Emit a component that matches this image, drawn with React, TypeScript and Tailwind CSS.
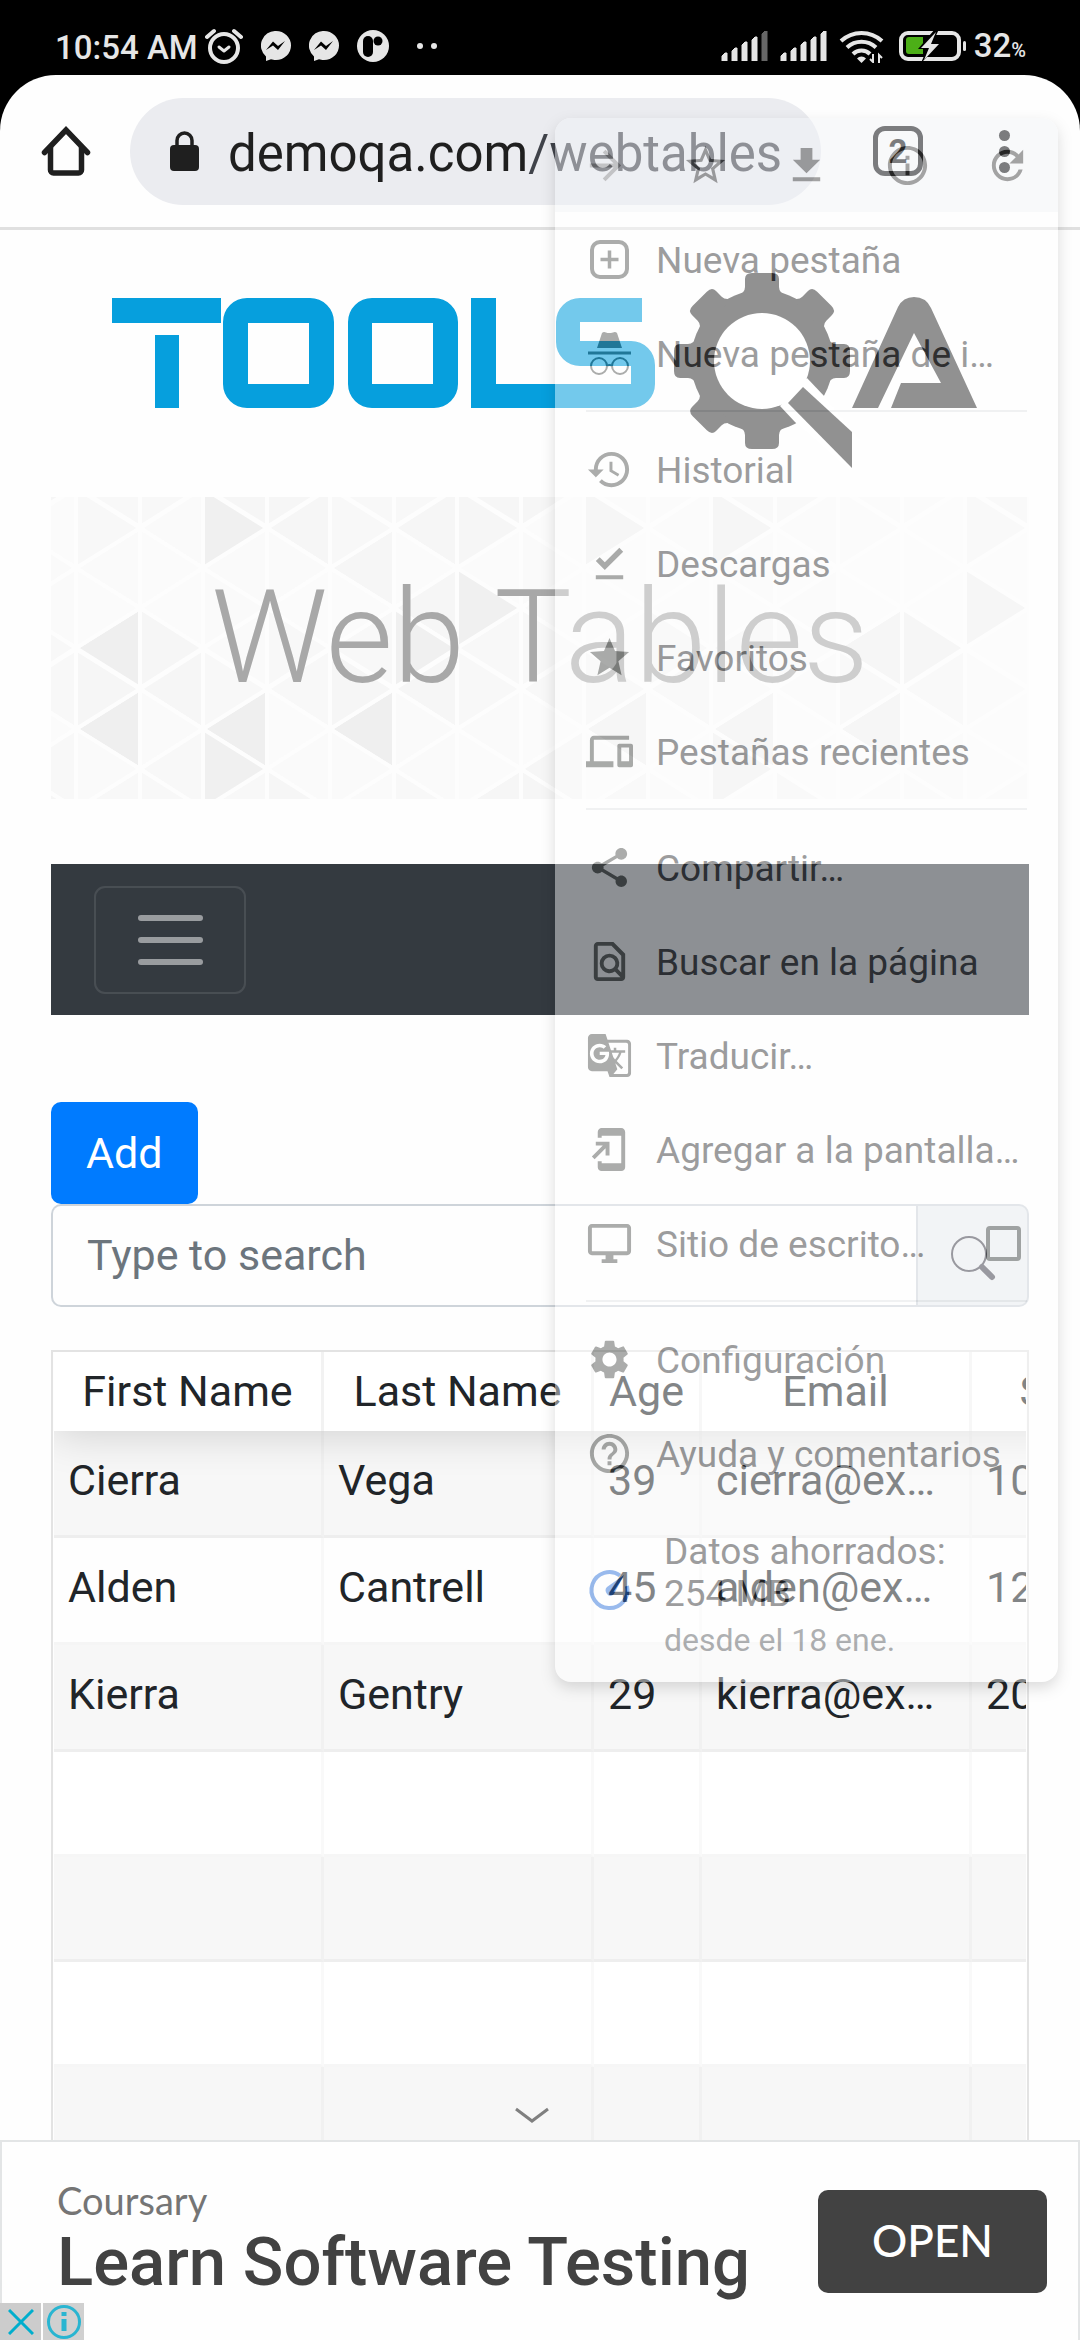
import React from "react";
import {
  MdAddToHomeScreen,
  MdArrowForward,
  MdDevices,
  MdFileDownload,
  MdFileDownloadDone,
  MdGTranslate,
  MdHelpOutline,
  MdHistory,
  MdInfoOutline,
  MdOutlineDesktopWindows,
  MdOutlineFindInPage,
  MdRefresh,
  MdSettings,
  MdShare,
  MdStar,
  MdStarBorder,
} from "react-icons/md";

/* ---------- Status bar ---------- */

function AlarmIcon() {
  return (
    <svg className="h-[36px] w-[38px]" viewBox="1 0 38 36" fill="none" stroke="#e6e6e6" strokeLinecap="round">
      <circle cx="20" cy="20" r="14" strokeWidth="4" />
      <path d="M3 9l7-6M37 9l-7-6" strokeWidth="4" />
      <path d="M15 19l5 4 5-4" strokeWidth="3" strokeLinejoin="round" />
    </svg>
  );
}

function MessengerIcon() {
  return (
    <svg className="h-[30px] w-[30px]" viewBox="0 0 30 30">
      <path d="M15 0a15 14.500 0 0 1 0 29c-2 0-3.500-.3-5-.8L5 30v-4.500A14.500 14.500 0 0 1 15 0z" fill="#e6e6e6" />
      <path d="M5 19l7-8.500 5 4.500 7-5-7 9-5-4.500z" fill="#000" />
    </svg>
  );
}

function PIcon() {
  return (
    <svg className="h-[32px] w-[32px]" viewBox="0 0 32 32">
      <circle cx="16" cy="16" r="16" fill="#e6e6e6" />
      <rect x="6" y="6" width="10" height="21" rx="5" fill="#000" />
      <circle cx="21" cy="11" r="4.500" fill="#000" />
    </svg>
  );
}

function SignalIcon({ full }: { full: boolean }) {
  const bars = [8, 13, 19, 24, 30];
  return (
    <svg className="h-[30px] w-[47px]" viewBox="0 0 47 30">
      {bars.map((h, i) => (
        <path
          key={h}
          d={`M${i * 10 + 1} 30V${30 - h + 3}l3-3h2v${h}z`}
          fill={i === 4 && !full ? "#666" : "#e6e6e6"}
          stroke={i === 4 && !full ? "#666" : "#e6e6e6"}
          strokeWidth="1"
        />
      ))}
    </svg>
  );
}

function WifiIcon() {
  return (
    <svg className="h-[34px] w-[46px]" viewBox="0 0 46 34" fill="none" stroke="#e6e6e6" strokeWidth="4">
      <path d="M2 12a30 30 0 0 1 41 0" />
      <path d="M8 18.500a21 21 0 0 1 29 0" />
      <path d="M14 25a12 12 0 0 1 17 0" />
      <path d="M18 29.500a6 6 0 0 1 9 0L22.500 34z" fill="#e6e6e6" stroke="none" />
      <path d="M34 25v8l-3-3M40 34v-8l3 3" strokeWidth="2" />
    </svg>
  );
}

function BatteryIcon() {
  return (
    <svg className="h-[30px] w-[68px]" viewBox="0 0 68 30">
      <rect x="2" y="2" width="58" height="26" rx="7" fill="none" stroke="#e6e6e6" strokeWidth="4" />
      <rect x="64" y="10" width="3" height="10" rx="1.500" fill="#e6e6e6" />
      <path d="M10 6h14v17H10a3 3 0 0 1-3-3V9a3 3 0 0 1 3-3z" fill="#4caf17" />
      <path d="M36-2L19 18h9l-6 14 19-19h-8l7-15z" fill="#000" />
      <path d="M37 1L22 17h8l-5 12 15-16h-8z" fill="#e6e6e6" />
    </svg>
  );
}

function StatusBar() {
  return (
    <div className="flex h-[75px] shrink-0 items-center justify-between bg-black pl-[55px] pr-[54px] pt-[17px] text-[#e6e6e6]">
      <div className="flex items-center">
        <span className="pt-[4px] text-[33px] font-medium leading-[36px]">10:54 AM</span>
        <span className="ml-[7px] flex items-center gap-[18px]">
          <AlarmIcon />
          <MessengerIcon />
          <MessengerIcon />
          <PIcon />
          <span className="ml-[10px] flex gap-[8px]">
            <span className="h-[6px] w-[6px] rounded-full bg-[#e6e6e6]" />
            <span className="h-[6px] w-[6px] rounded-full bg-[#e6e6e6]" />
          </span>
        </span>
      </div>
      <div className="flex items-center">
        <SignalIcon full={false} />
        <span className="ml-[12px] flex">
          <SignalIcon full />
        </span>
        <span className="ml-[12px] mr-[14px] flex">
          <WifiIcon />
        </span>
        <BatteryIcon />
        <span className="ml-[7px] pt-[4px] text-[33px] font-medium leading-[36px]">
          32<span className="text-[20px]">%</span>
        </span>
      </div>
    </div>
  );
}

/* ---------- Browser toolbar ---------- */

function Toolbar() {
  return (
    <header className="flex h-[155px] shrink-0 items-center border-b-[3px] border-[#e0e0e0] pl-[41px]">
      <button type="button" aria-label="Inicio">
        <svg className="h-[50px] w-[50px]" viewBox="0 0 50 50" fill="none" stroke="#1f1f1f" strokeWidth="5.500">
          <path d="M3.500 26.500L25 4l21.500 22.500" strokeLinejoin="miter" strokeLinecap="round" />
          <path d="M9.500 21v23a3 3 0 0 0 3 3h25a3 3 0 0 0 3-3V21" />
        </svg>
      </button>
      <div className="ml-[39px] flex h-[107px] min-w-0 flex-1 items-center rounded-full bg-[#ebecf0] pl-[40px]">
        <svg className="h-[40px] w-[29px] shrink-0" viewBox="0 0 29 40">
          <rect x="0" y="14" width="29" height="26" rx="4" fill="#1f1f1f" />
          <path d="M7 16V9.500a7.500 7.500 0 0 1 15 0V16" fill="none" stroke="#1f1f1f" strokeWidth="3.500" />
        </svg>
        <a href="#top" className="ml-[29px] whitespace-nowrap pt-[5px] text-[51px] leading-[60px] text-[#1f1f1f]">
          demoqa.com<span className="text-[#40434a]">/webtables</span>
        </a>
      </div>
      <button
        type="button"
        aria-label="Pestañas abiertas"
        className="ml-[52px] flex h-[50px] w-[50px] items-center justify-center rounded-[12px] border-[5px] border-[#1f1f1f] text-[33px] font-bold leading-none text-[#1f1f1f]"
      >
        2
      </button>
      <button type="button" aria-label="Más opciones" className="ml-[76px] mr-[70px] flex flex-col gap-[5px]">
        <span className="h-[11px] w-[11px] rounded-full bg-[#1f1f1f]" />
        <span className="h-[11px] w-[11px] rounded-full bg-[#1f1f1f]" />
        <span className="h-[11px] w-[11px] rounded-full bg-[#1f1f1f]" />
      </button>
    </header>
  );
}

/* ---------- Page ---------- */

function Logo() {
  return (
    <svg className="h-[210px] w-[866px]" viewBox="112 260 866 210" role="img" aria-label="ToolsQA">
      <g fill="#069fdd">
        <path d="M112 298h109v25H112zM155 335h24v73h-24z" />
        <path
          fillRule="evenodd"
          d="M247 298h63a24 24 0 0 1 24 24v62a24 24 0 0 1-24 24h-63a24 24 0 0 1-24-24v-62a24 24 0 0 1 24-24zM248 323v61h61v-61z"
        />
        <path
          fillRule="evenodd"
          d="M372 298h62a24 24 0 0 1 24 24v62a24 24 0 0 1-24 24h-62a24 24 0 0 1-24-24v-62a24 24 0 0 1 24-24zM372 323v61h61v-61z"
        />
        <path d="M471 298h25v86h135v-18h-51a24 24 0 0 1-24-24v-20a24 24 0 0 1 24-24h62v24h-62v19h51a24 24 0 0 1 24 24v19a24 24 0 0 1-24 24H471z" />
      </g>
      <g fill="#3b3b3b">
        <circle cx="762" cy="361" r="71" />
        {[0, 45, 90, 180, 225, 270, 315].map((a) => (
          <path
            key={a}
            d="M737 296q8-3 8-9v-8q0-6 7-6h20q7 0 7 6v8q0 6 8 9z"
            transform={`rotate(${a} 762 361)`}
          />
        ))}
      </g>
      <circle cx="762" cy="361" r="48" fill="#fff" />
      <path d="M807 378l18 19 35 43v40l-65-58-15-16z" fill="#fff" />
      <path d="M803 387l49 45v36l-64-65z" fill="#3b3b3b" />
      <path
        d="M852 408L898 307Q903 297 914 297Q926 297 931 308L977 408H891L901 383H941L914 333L878 408Z"
        fill="#3b3b3b"
      />
    </svg>
  );
}

const STEP_X = 63.5;
const STEP_Y = 80.5;
const DARK = new Set([
  "0L151", "0L232", "2L232", "4L232", "2R272", "2R31", "5R151", "12L151", "13R151",
  "10L232", "12L232", "10R272", "10R31", "8L232", "14R111", "6R111", "8R31",
]);

function BannerPattern() {
  const tiles: { d: string; fill: string }[] = [];
  for (let i = -1; i < 16; i++) {
    const x0 = Math.round(25 + i * STEP_X);
    const x1 = Math.round(25 + (i + 1) * STEP_X);
    const leftOffset = i % 2 === 0 ? -10 : -50;
    const rightOffset = i % 2 === 0 ? -50 : -10;
    for (let k = -1; k < 6; k++) {
      const ly = Math.round(leftOffset + k * STEP_Y);
      const ry = Math.round(rightOffset + k * STEP_Y);
      const shade = (seed: number) => ["#f8f8f8", "#fafafa", "#f6f6f6", "#fbfbfb"][Math.abs(seed) % 4];
      tiles.push({
        d: `M${x0} ${ly}L${x1} ${ly - 40}V${ly + 40}Z`,
        fill: DARK.has(`${i}L${ly}`) ? "#efefef" : shade(i * 7 + k * 5 + ((i * k) % 3)),
      });
      tiles.push({
        d: `M${x1} ${ry}L${x0} ${ry - 40}V${ry + 40}Z`,
        fill: DARK.has(`${i}R${ry}`) ? "#f0f0f0" : shade(i * 3 + k * 11 + 1),
      });
    }
  }
  return (
    <svg
      className="absolute inset-0 h-full w-full"
      viewBox="0 0 978 302"
      preserveAspectRatio="xMidYMid slice"
      aria-hidden="true"
    >
      {tiles.map((t, i) => (
        <path key={i} d={t.d} fill={t.fill} stroke="#fdfdfd" strokeWidth="4" />
      ))}
    </svg>
  );
}

const people = [
  ["Cierra", "Vega", "39", "cierra@example.com", "10000"],
  ["Alden", "Cantrell", "45", "alden@example.com", "12000"],
  ["Kierra", "Gentry", "29", "kierra@example.com", "2000"],
];
const emptyRows = [3, 4, 5, 6, 7, 8, 9];

function PeopleTable() {
  return (
    <div className="mt-[43px] border-2 border-[#e3e3e3] px-px">
      <div className="overflow-hidden">
        <table className="w-[1134px] table-fixed border-separate border-spacing-0 text-[43px] leading-[50px] text-[#212529]">
          <colgroup>
            <col className="w-[270px]" />
            <col className="w-[270px]" />
            <col className="w-[108px]" />
            <col className="w-[270px]" />
            <col className="w-[216px]" />
          </colgroup>
          <thead className="relative z-10 shadow-[0_5px_41px_rgba(0,0,0,0.15)]">
            <tr>
              {["First Name", "Last Name", "Age", "Email", "Salary"].map((h) => (
                <th
                  key={h}
                  scope="col"
                  className="h-[79px] border-r-[3px] border-black/5 bg-white p-0 pb-[2px] text-center font-normal"
                >
                  {h}
                </th>
              ))}
            </tr>
          </thead>
          <tbody>
            {people.map((row) => (
              <tr key={row[0]} className="odd:bg-[#f7f7f7]">
                {row.map((cell) => (
                  <td
                    key={cell}
                    className="h-[107px] truncate border-b-[3px] border-r-[3px] border-b-black/3 border-r-black/2 px-[14px] pb-[6px] pt-0"
                  >
                    {cell}
                  </td>
                ))}
              </tr>
            ))}
            {emptyRows.map((n) => (
              <tr key={n} className="even:bg-white odd:bg-[#f7f7f7]">
                {[0, 1, 2, 3, 4].map((c) => (
                  <td
                    key={c}
                    className="h-[105px] border-b-[3px] border-r-[3px] border-b-black/3 border-r-black/2 p-0"
                  />
                ))}
              </tr>
            ))}
          </tbody>
        </table>
      </div>
    </div>
  );
}

function Page() {
  return (
    <main className="min-h-0 flex-1 overflow-hidden px-[51px]">
      <div className="flex h-[267px] items-start justify-center pl-[10px] pt-[30px]">
        <Logo />
      </div>
      <div className="relative flex h-[302px] items-center justify-center pb-[20px]">
        <BannerPattern />
        <h1 className="relative text-[130px] font-light leading-[140px] text-[#a8a8a8]">Web Tables</h1>
      </div>
      <nav className="mt-[65px] flex h-[151px] items-center bg-[#343a40] px-[43px]">
        <button
          type="button"
          aria-label="Menú"
          className="flex h-[108px] w-[152px] flex-col items-center justify-center gap-[16px] rounded-[11px] border-2 border-white/10"
        >
          <span className="h-[6px] w-[65px] rounded-full bg-[#999c9f]" />
          <span className="h-[6px] w-[65px] rounded-full bg-[#999c9f]" />
          <span className="h-[6px] w-[65px] rounded-full bg-[#999c9f]" />
        </button>
      </nav>
      <button
        type="button"
        className="mt-[87px] block h-[102px] rounded-[10px] bg-[#007bff] px-[35px] text-[43px] leading-[50px] text-white"
      >
        Add
      </button>
      <form className="flex h-[103px]">
        <input
          type="text"
          aria-label="Type to search"
          placeholder="Type to search"
          className="min-w-0 flex-1 rounded-l-[10px] border-2 border-r-0 border-[#ced4da] px-[34px] text-[43px] placeholder:text-[#6c757d]"
        />
        <button
          type="button"
          aria-label="Search"
          className="flex w-[113px] items-center justify-center rounded-r-[10px] border-2 border-[#ced4da] bg-[#e9ecef] pt-[4px]"
        >
          <svg className="h-[46px] w-[46px]" viewBox="0 0 46 46" fill="none" stroke="#4a4a55">
            <circle cx="19" cy="19" r="17" strokeWidth="2" />
            <path d="M32 32l10 10" strokeWidth="6" strokeLinecap="round" />
          </svg>
        </button>
      </form>
      <PeopleTable />
    </main>
  );
}

/* ---------- Overflow menu ---------- */

function NewTabIcon() {
  return (
    <svg className="h-[47px] w-[47px]" viewBox="0 0 47 47" fill="none" stroke="currentColor" strokeWidth="4">
      <rect x="6" y="6" width="35" height="35" rx="8" />
      <path d="M23.500 14.500v18M14.500 23.500h18" strokeWidth="3.500" />
    </svg>
  );
}

function IncognitoIcon() {
  return (
    <svg className="h-[47px] w-[47px]" viewBox="0 0 47 47">
      <path d="M11 18l5-15q1.500-1.500 4-.5t7 0q2.500-1 4 .5l5 15z" fill="currentColor" />
      <path d="M2 21.500h43v3H2z" fill="currentColor" />
      <g fill="none" stroke="currentColor" strokeWidth="2">
        <circle cx="13" cy="36" r="8" />
        <circle cx="34" cy="36" r="8" />
        <path d="M21 36q2.500-2 5 0" />
      </g>
    </svg>
  );
}

function DataSaverIcon() {
  return (
    <svg className="h-[47px] w-[47px] shrink-0" viewBox="0 0 47 47" fill="none" stroke="#1a66d8">
      <path d="M34 8.500A18 18 0 1 0 41 19" strokeWidth="4" />
      <path d="M38 8L28 27q-4 4-7 0t0-7z" fill="#1a66d8" stroke="none" />
    </svg>
  );
}

function Item({ icon, label }: { icon: React.ReactNode; label: string }) {
  return (
    <button type="button" className="flex h-[94px] w-full items-center gap-[23px] pl-[31px] pr-[31px] text-left">
      <span className="shrink-0 text-[47px] text-[#424542]">{icon}</span>
      <span className="whitespace-nowrap pt-[4px]">{label}</span>
    </button>
  );
}

function Separator() {
  return (
    <div className="px-[31px] py-[10px]">
      <div className="h-[2px] bg-[#dfe1e3]" />
    </div>
  );
}

function OverflowMenu() {
  return (
    <div className="absolute right-[22px] top-[118px] z-20 w-[503px] overflow-visible rounded-[16px] bg-white pb-[1px] text-[37px] leading-[42px] text-[#202124] opacity-[0.44] shadow-[0_6px_14px_rgba(0,0,0,0.3)]">
      <div className="grid h-[94px] grid-cols-5 place-items-center rounded-t-[16px] bg-[#f1f3f7] text-[47px] text-[#303030]">
        <button type="button" aria-label="Adelante" className="text-[#909090]">
          <MdArrowForward />
        </button>
        <button type="button" aria-label="Agregar a favoritos">
          <MdStarBorder />
        </button>
        <button type="button" aria-label="Descargar">
          <MdFileDownload />
        </button>
        <button type="button" aria-label="Información">
          <MdInfoOutline />
        </button>
        <button type="button" aria-label="Actualizar">
          <MdRefresh />
        </button>
      </div>
      <Item icon={<NewTabIcon />} label="Nueva pestaña" />
      <Item icon={<IncognitoIcon />} label="Nueva pestaña de i…" />
      <Separator />
      <Item icon={<MdHistory />} label="Historial" />
      <Item icon={<MdFileDownloadDone />} label="Descargas" />
      <Item icon={<MdStar />} label="Favoritos" />
      <Item icon={<MdDevices />} label="Pestañas recientes" />
      <Separator />
      <Item icon={<MdShare />} label="Compartir…" />
      <Item icon={<MdOutlineFindInPage />} label="Buscar en la página" />
      <Item icon={<MdGTranslate />} label="Traducir…" />
      <Item icon={<MdAddToHomeScreen />} label="Agregar a la pantalla…" />
      <label className="flex h-[94px] items-center gap-[23px] pl-[31px] pr-[37px]">
        <MdOutlineDesktopWindows className="shrink-0 text-[47px] text-[#424542]" />
        <span className="min-w-0 flex-1 whitespace-nowrap pt-[4px]">Sitio de escrito…</span>
        <input
          type="checkbox"
          className="h-[35px] w-[35px] shrink-0 appearance-none rounded-[4px] border-4 border-[#424542]"
        />
      </label>
      <Separator />
      <Item icon={<MdSettings />} label="Configuración" />
      <Item icon={<MdHelpOutline />} label="Ayuda y comentarios" />
      <button type="button" className="flex h-[181px] w-full items-center gap-[31px] pl-[31px] text-left">
        <DataSaverIcon />
        <span className="flex flex-col pt-[10px]">
          <span>Datos ahorrados:</span>
          <span>254 MB</span>
          <span className="mt-[4px] text-[32px] text-[#4b4e52]">desde el 18 ene.</span>
        </span>
      </button>
    </div>
  );
}

/* ---------- Ad ---------- */

function AdBanner() {
  return (
    <aside className="relative flex h-[200px] shrink-0 items-start justify-between border-x-2 border-t-2 border-[#e3e5e6] bg-[#fefefe] pl-[55px] pr-[31px] font-['Lato',sans-serif]">
      <button type="button" aria-label="Ocultar anuncio" className="absolute -top-[36px] left-[512px]">
        <svg className="block h-[18px] w-[36px]" viewBox="0 0 36 18" fill="none" stroke="#808080" strokeWidth="3">
          <path d="M2 3l16 12L34 3" />
        </svg>
      </button>
      <div className="pt-[36px]">
        <p className="text-[38px] leading-[44px] text-[#757575]">Coursary</p>
        <p className="whitespace-nowrap font-['Roboto',sans-serif] text-[67px] font-medium leading-[80px] text-[#424242]">
          Learn Software Testing
        </p>
      </div>
      <button
        type="button"
        className="mt-[48px] h-[103px] w-[229px] rounded-[10px] bg-[#424242] pb-[4px] text-[44px] font-medium text-white"
      >
        OPEN
      </button>
      <div className="absolute -left-[2px] bottom-0 flex gap-[2px]">
        <button type="button" aria-label="Cerrar anuncio" className="flex h-[37px] w-[41px] items-center justify-center bg-[#cccccc]">
          <svg className="h-[26px] w-[26px]" viewBox="0 0 26 26" stroke="#00aecd" strokeWidth="3">
            <path d="M1 1l24 24M25 1L1 25" />
          </svg>
        </button>
        <button type="button" aria-label="Acerca del anuncio" className="flex h-[37px] w-[41px] items-center justify-center bg-[#d0d0d0]">
          <svg className="h-[36px] w-[36px]" viewBox="0 0 36 36" fill="none" stroke="#29b5d1">
            <circle cx="18" cy="18" r="15.500" strokeWidth="3" />
            <path d="M18 15v12" strokeWidth="5" />
            <path d="M18 8v4" strokeWidth="5" />
          </svg>
        </button>
      </div>
    </aside>
  );
}

export default function App() {
  return (
    <div className="relative flex h-screen flex-col bg-black font-['Roboto',sans-serif]">
      <StatusBar />
      <div className="flex min-h-0 flex-1 flex-col overflow-hidden rounded-t-[56px] bg-[#fefefe]">
        <Toolbar />
        <Page />
        <AdBanner />
      </div>
      <OverflowMenu />
    </div>
  );
}
